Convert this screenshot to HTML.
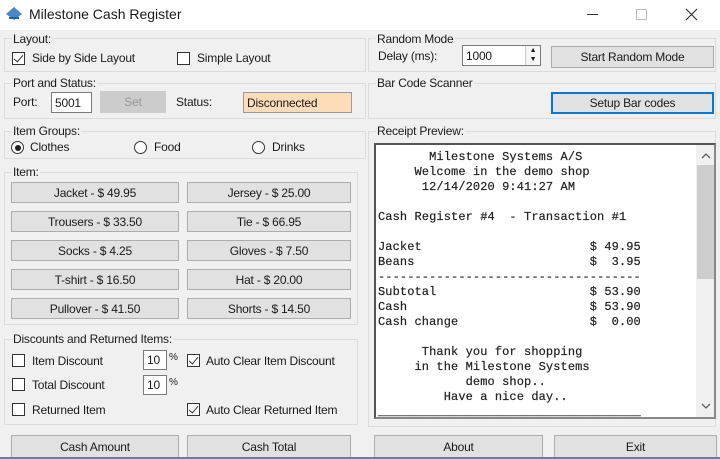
<!DOCTYPE html>
<html><head><meta charset="utf-8"><style>
*{box-sizing:border-box;margin:0;padding:0}
body{width:720px;height:459px;overflow:hidden;background:#f0f0f0;font-family:"Liberation Sans",sans-serif;font-size:12px;color:#1a1a1a;position:relative;letter-spacing:-0.2px}
.a{position:absolute;white-space:nowrap}
.title{position:absolute;left:0;top:0;width:720px;height:30px;background:#fff}
.gb{position:absolute;border:1px solid #dcdcdc}
.lbl{position:absolute;background:#f0f0f0;padding:0 1px;line-height:14px}
.btn{position:absolute;background:#e1e1e1;border:1px solid #adadad;text-align:center;font-size:12px;display:flex;align-items:center;justify-content:center}
.cb{position:absolute;width:13px;height:13px;border:1px solid #333;background:#fff}
.cb.on::after{content:"";position:absolute;left:3px;top:0px;width:4px;height:8px;border:solid #333;border-width:0 1.5px 1.5px 0;transform:rotate(40deg)}
.rb{position:absolute;width:13px;height:13px;border:1px solid #333;border-radius:50%;background:#fff}
.rb.on::after{content:"";position:absolute;left:2.5px;top:2.5px;width:6px;height:6px;border-radius:50%;background:#222}
.tb{position:absolute;background:#fff;border:1px solid #7a7a7a;padding-left:3px;display:flex;align-items:center}
pre{font-family:"Liberation Mono",monospace;font-size:12px;line-height:15px;color:#222;letter-spacing:0.1px;-webkit-text-stroke:0.2px #222}
</style></head><body>
<div class="title">
<svg class="a" style="left:5px;top:6px" width="18" height="16"><polygon points="9,1 17,8 9,14 1,8" fill="#4a86c8"/><rect x="4" y="11" width="10" height="2" fill="#2c5f99"/></svg>
<div class="a" style="left:29px;top:6px;font-size:14px;letter-spacing:0">Milestone Cash Register</div>
<div class="a" style="left:587px;top:14px;width:11px;height:1px;background:#333"></div>
<div class="a" style="left:636px;top:9px;width:11px;height:11px;border:1px solid #bbb"></div>
<svg class="a" style="left:685px;top:8px" width="13" height="13"><path d="M1 1L12 12M12 1L1 12" stroke="#333" stroke-width="1.2"/></svg>
</div>

<div class="gb" style="left:4px;top:38px;width:362px;height:34px"></div>
<div class="lbl" style="left:12px;top:32px">Layout:</div>
<div class="cb on" style="left:12px;top:52px"></div><div class="a" style="left:32px;top:51px">Side by Side Layout</div>
<div class="cb" style="left:177px;top:52px"></div><div class="a" style="left:197px;top:51px">Simple Layout</div>

<div class="gb" style="left:4px;top:83px;width:362px;height:36px"></div>
<div class="lbl" style="left:12px;top:76px">Port and Status:</div>
<div class="a" style="left:13px;top:95px">Port:</div>
<div class="tb" style="left:51px;top:92px;width:41px;height:21px">5001</div>
<div class="btn" style="left:100px;top:91px;width:66px;height:22px;background:#ccc;border-color:#ccc;color:#999">Set</div>
<div class="a" style="left:176px;top:95px">Status:</div>
<div class="tb" style="left:243px;top:92px;width:109px;height:21px;background:#fddcb9;border-color:#999">Disconnected</div>

<div class="gb" style="left:4px;top:131px;width:362px;height:28px"></div>
<div class="lbl" style="left:12px;top:124px">Item Groups:</div>
<div class="rb on" style="left:11px;top:141px"></div><div class="a" style="left:30px;top:140px">Clothes</div>
<div class="rb" style="left:134px;top:141px"></div><div class="a" style="left:154px;top:140px">Food</div>
<div class="rb" style="left:252px;top:141px"></div><div class="a" style="left:272px;top:140px">Drinks</div>

<div class="gb" style="left:4px;top:172px;width:354px;height:153px"></div>
<div class="lbl" style="left:12px;top:165px">Item:</div>
<div class="btn" style="left:11px;top:182px;width:168px;height:21px">Jacket - $ 49.95</div>
<div class="btn" style="left:187px;top:182px;width:164px;height:21px">Jersey - $ 25.00</div>
<div class="btn" style="left:11px;top:211px;width:168px;height:21px">Trousers - $ 33.50</div>
<div class="btn" style="left:187px;top:211px;width:164px;height:21px">Tie - $ 66.95</div>
<div class="btn" style="left:11px;top:240px;width:168px;height:21px">Socks - $ 4.25</div>
<div class="btn" style="left:187px;top:240px;width:164px;height:21px">Gloves - $ 7.50</div>
<div class="btn" style="left:11px;top:269px;width:168px;height:21px">T-shirt - $ 16.50</div>
<div class="btn" style="left:187px;top:269px;width:164px;height:21px">Hat - $ 20.00</div>
<div class="btn" style="left:11px;top:298px;width:168px;height:21px">Pullover - $ 41.50</div>
<div class="btn" style="left:187px;top:298px;width:164px;height:21px">Shorts - $ 14.50</div>

<div class="gb" style="left:4px;top:339px;width:354px;height:86px"></div>
<div class="lbl" style="left:12px;top:332px">Discounts and Returned Items:</div>
<div class="cb" style="left:12px;top:354px"></div><div class="a" style="left:32px;top:354px">Item Discount</div>
<div class="tb" style="left:143px;top:350px;width:24px;height:20px">10</div><div class="a" style="left:169px;top:352px;font-size:10px">%</div>
<div class="cb on" style="left:187px;top:354px"></div><div class="a" style="left:206px;top:354px">Auto Clear Item Discount</div>
<div class="cb" style="left:12px;top:378px"></div><div class="a" style="left:32px;top:378px">Total Discount</div>
<div class="tb" style="left:143px;top:375px;width:24px;height:20px">10</div><div class="a" style="left:169px;top:377px;font-size:10px">%</div>
<div class="cb" style="left:12px;top:403px"></div><div class="a" style="left:32px;top:403px">Returned Item</div>
<div class="cb on" style="left:187px;top:403px"></div><div class="a" style="left:206px;top:403px">Auto Clear Returned Item</div>

<div class="gb" style="left:368px;top:38px;width:348px;height:34px"></div>
<div class="lbl" style="left:376px;top:32px">Random Mode</div>
<div class="a" style="left:378px;top:49px">Delay (ms):</div>
<div class="tb" style="left:462px;top:45px;width:79px;height:21px">1000</div>
<div class="a" style="left:525px;top:46px;width:15px;height:19px;border-left:1px solid #ccc;background:#f6f6f6;font-size:7px;line-height:9px;text-align:center">▲<br>▼</div>
<div class="btn" style="left:551px;top:46px;width:163px;height:22px">Start Random Mode</div>

<div class="gb" style="left:368px;top:83px;width:348px;height:36px"></div>
<div class="lbl" style="left:376px;top:76px">Bar Code Scanner</div>
<div class="btn" style="left:551px;top:92px;width:163px;height:22px;border:2px solid #0078d7">Setup Bar codes</div>

<div class="gb" style="left:368px;top:131px;width:348px;height:296px"></div>
<div class="lbl" style="left:376px;top:124px">Receipt Preview:</div>
<div class="a" style="left:374px;top:143px;width:342px;height:276px;background:#fff;border:2px solid #555;border-right-color:#888;border-bottom-color:#888;overflow:hidden">
<pre style="position:absolute;left:2px;top:5px">       Milestone Systems A/S
     Welcome in the demo shop
      12/14/2020 9:41:27 AM

Cash Register #4  - Transaction #1

Jacket                       $ 49.95
Beans                        $  3.95
------------------------------------
Subtotal                     $ 53.90
Cash                         $ 53.90
Cash change                  $  0.00

      Thank you for shopping
     in the Milestone Systems
            demo shop..
         Have a nice day..
____________________________________</pre>
<div class="a" style="left:320px;top:0;width:19px;height:272px;background:#f0f0f0"></div>
<div class="a" style="left:321px;top:20px;width:17px;height:114px;background:#cdcdcd"></div>
<svg class="a" style="left:325px;top:8px" width="10" height="6"><path d="M1 5L5 1L9 5" stroke="#606060" fill="none" stroke-width="1.3"/></svg>
<svg class="a" style="left:325px;top:258px" width="10" height="6"><path d="M1 1L5 5L9 1" stroke="#606060" fill="none" stroke-width="1.3"/></svg>
</div>

<div class="btn" style="left:11px;top:435px;width:168px;height:23px">Cash Amount</div>
<div class="btn" style="left:187px;top:435px;width:164px;height:23px">Cash Total</div>
<div class="btn" style="left:374px;top:435px;width:169px;height:23px">About</div>
<div class="btn" style="left:554px;top:435px;width:163px;height:23px">Exit</div>
<div class="a" style="left:0;top:457px;width:720px;height:2px;background:#3b8ad8"></div>
</body></html>
